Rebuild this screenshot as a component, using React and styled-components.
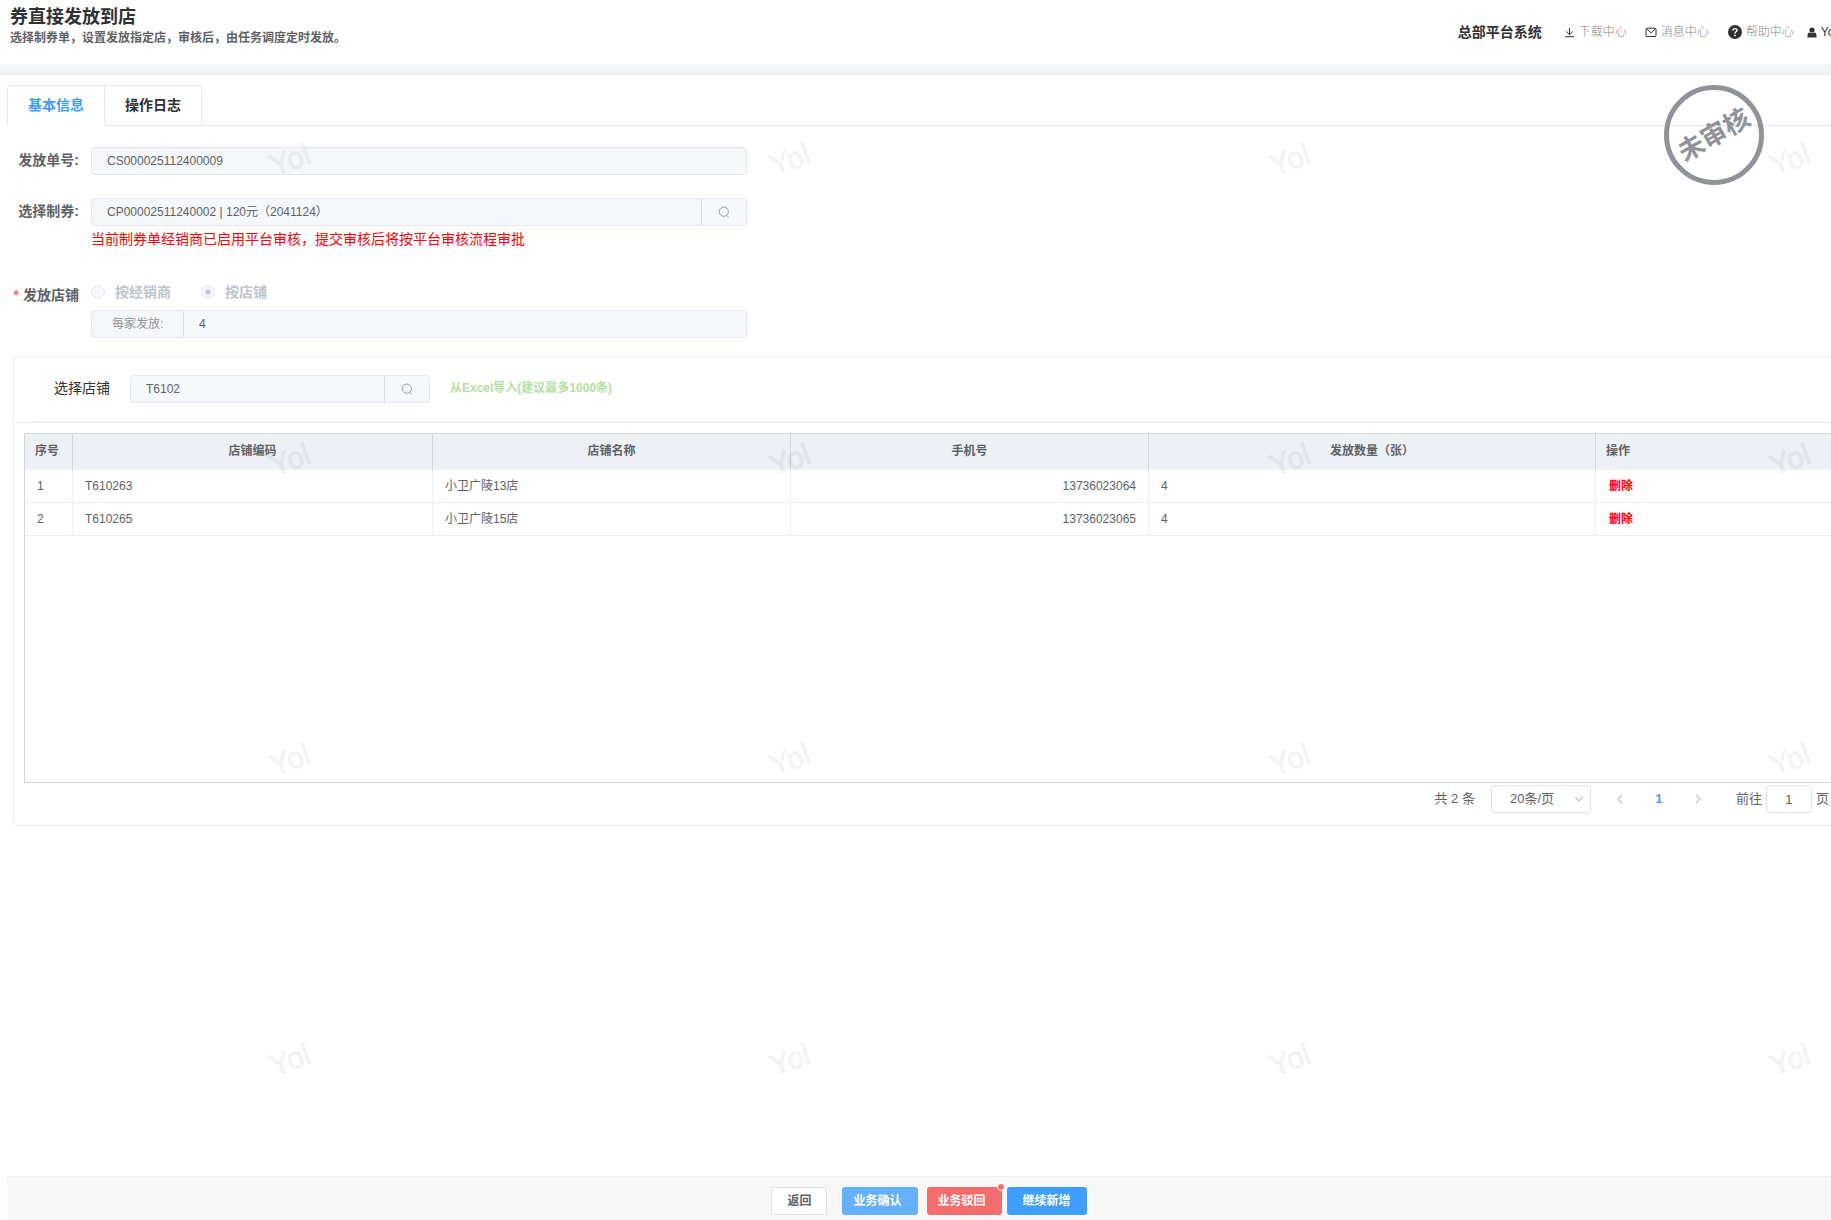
import React, { useState } from "react"
import styled, { createGlobalStyle, css } from "styled-components"

const colors = {
  primary: "#409eff",
  danger: "#f56c6c",
  red: "#ff0000",
  text: "#606266",
  title: "#303133",
  muted: "#909399",
  placeholder: "#c0c4cc",
  border: "#dcdfe6",
  borderLight: "#e4e7ed",
  borderLighter: "#ebeef5",
  disabled: "#f5f7fa",
}

const GlobalStyle = createGlobalStyle`
  * {
    box-sizing: border-box;
  }

  body {
    margin: 0;
    color: ${colors.text};
    font: 12px/18px "Liberation Sans", "Noto Sans CJK SC", sans-serif;
  }

  button, input, select {
    font: inherit;
    margin: 0;
  }
`

const Page = styled.div`
  position: relative;
  display: flex;
  flex-direction: column;
  min-height: 100vh;
  overflow: hidden;
`

const Header = styled.header`
  display: flex;
  justify-content: space-between;
  height: 64px;
  padding: 5px 0 0 10px;
`

const Title = styled.h1`
  margin: 0;
  color: ${colors.title};
  font-size: 18px;
  font-weight: 700;
  line-height: 24px;
`

const SubTitle = styled.p`
  margin: 0;
  font-weight: 700;
`

const Nav = styled.nav`
  display: flex;
  align-items: center;
  height: 54px;
  margin-right: -8px;
  white-space: nowrap;
`

const SystemName = styled.strong`
  margin-right: 22px;
  color: ${colors.title};
  font-size: 14px;
  font-weight: 700;
`

const NavLink = styled.a`
  display: flex;
  align-items: center;
  gap: 4px;
  margin-right: ${props => props.$space || 18}px;
  color: ${props => (props.$strong ? colors.title : "#888")};
  font-weight: ${props => (props.$strong ? 400 : 300)};
  text-decoration: none;

  svg {
    flex: none;
    color: ${colors.title};
  }
`

const Band = styled.div`
  height: 11px;
  background: linear-gradient(#f6f7f9, #f5f6f8 50%, #ebecee);
`

const Main = styled.main`
  position: relative;
  flex: 1;
  padding: 10px 0 20px 7px;
`

const Tabs = styled.div`
  display: flex;
  height: 41px;
  border-bottom: 1px solid ${colors.borderLight};
`

const Tab = styled.button`
  height: 41px;
  padding: 0 20px 2px;
  border: 1px solid ${colors.borderLight};
  border-bottom-color: ${props => (props.$active ? "#fff" : colors.borderLight)};
  border-radius: 0 4px 0 0;
  background: #fff;
  color: ${props => (props.$active ? colors.primary : colors.title)};
  font-size: 14px;
  font-weight: 700;
  cursor: pointer;

  &:first-child {
    border-right: 0;
    border-radius: 4px 0 0 0;
  }
`

const Stamp = styled.div`
  position: absolute;
  top: 10px;
  right: 67px;
  display: flex;
  align-items: center;
  justify-content: center;
  width: 100px;
  height: 100px;
  border: 5px solid ${colors.muted};
  border-radius: 50%;
  color: ${colors.muted};
  font-size: 26px;
  font-weight: 700;
  white-space: nowrap;

  span {
    transform: rotate(-30deg);
  }
`

const Form = styled.form`
  display: grid;
  grid-template-columns: 72px minmax(0, 656px);
  column-gap: 12px;
  padding-top: 21px;
`

const Label = styled.label`
  color: ${colors.text};
  font-size: 14px;
  font-weight: 700;
  line-height: 26px;
  text-align: right;
  white-space: nowrap;

  ${props =>
    props.$required &&
    css`
      line-height: 34px;

      &::before {
        content: "*";
        margin-right: 4px;
        color: ${colors.danger};
      }
    `}
`

const Field = styled.div`
  padding-bottom: ${props => props.$space}px;
`

const InputGroup = styled.div`
  display: flex;
  width: 100%;
  height: 28px;
  border: 1px solid ${colors.borderLight};
  border-radius: 4px;
  background: ${colors.disabled};
  overflow: hidden;
`

const TextInput = styled.input`
  flex: 1;
  min-width: 0;
  padding: 0 15px;
  border: 0;
  outline: 0;
  background: transparent;
  color: ${colors.text};
`

const SearchButton = styled.button`
  display: flex;
  align-items: center;
  justify-content: center;
  width: 45px;
  padding: 0;
  border: 0;
  border-left: 1px solid ${colors.border};
  background: transparent;
  color: ${colors.muted};
`

const Prepend = styled.label`
  width: 92px;
  padding-left: 20px;
  border-right: 1px solid ${colors.border};
  color: ${colors.muted};
  line-height: 26px;
`

const Notice = styled.p`
  margin: 0;
  color: ${colors.red};
  font-size: 14px;
  line-height: 26px;
`

const Radios = styled.div`
  display: flex;
  gap: 30px;
  height: 32px;
`

const RadioLabel = styled.label`
  display: flex;
  align-items: center;
  gap: 10px;
  height: 28px;
  color: ${colors.placeholder};
  font-size: 14px;
  font-weight: 700;
`

const Radio = styled.input`
  appearance: none;
  width: 14px;
  height: 14px;
  border: 1px solid ${colors.borderLight};
  border-radius: 50%;
  background: ${colors.disabled};

  &:checked {
    background: radial-gradient(${colors.placeholder} 2px, ${colors.disabled} 3px);
  }
`

const Card = styled.section`
  margin: 18px 0 0 6px;
  border: 1px solid ${colors.borderLighter};
  border-right: 0;
  border-radius: 4px 0 0 4px;
`

const CardHeader = styled.div`
  display: flex;
  height: 66px;
  padding: 18px 0 0 40px;
  border-bottom: 1px solid ${colors.borderLighter};
`

const ShopLabel = styled.label`
  width: 76px;
  color: ${colors.title};
  font-size: 14px;
  line-height: 26px;
`

const ShopSearch = styled.div`
  width: 300px;
  margin-right: 20px;
`

const ImportButton = styled.button`
  height: 26px;
  padding: 0;
  border: 0;
  background: none;
  color: #b3e19d;
  font-weight: 700;
`

const Divider = styled.hr`
  height: 2px;
  margin: -2px 7px 10px 20px;
  border: 0;
  background: #ebf0f5;
`

const TableBox = styled.div`
  height: 350px;
  margin-left: 10px;
  border: 1px solid #d4d6d9;
  border-right: 0;
`

const Table = styled.table`
  width: 100%;
  border-spacing: 0;
  table-layout: fixed;
`

const HeadCell = styled.th`
  width: ${props => (props.$width ? `${props.$width}px` : "auto")};
  height: 36px;
  padding: 0 10px 2px;
  border-right: 1px solid #d4d6d9;
  background: #edf0f5;
  font-weight: 700;
  text-align: ${props => props.$align || "center"};

  &:last-child {
    border-right: 0;
  }
`

const Cell = styled.td`
  height: 33px;
  padding: 0 12px;
  border-right: 1px solid ${colors.borderLighter};
  border-bottom: 1px solid ${colors.borderLighter};
  text-align: ${props => props.$align || "left"};

  &:last-child {
    border-right: 0;
  }
`

const DeleteButton = styled.button`
  padding: 0 1px;
  border: 0;
  background: none;
  color: ${colors.red};
  font-weight: 700;
  cursor: pointer;
`

const Pagination = styled.div`
  display: flex;
  align-items: center;
  justify-content: flex-end;
  height: 42px;
  padding: 0 2px 10px 0;
  font-size: 13px;
`

const SizeSelect = styled.div`
  position: relative;
  margin: 0 19px 0 16px;

  select {
    appearance: none;
    width: 100px;
    height: 28px;
    padding: 0 25px 0 18px;
    border: 1px solid ${colors.border};
    border-radius: 3px;
    background: #fff;
    color: ${colors.text};
  }

  svg {
    position: absolute;
    top: 9px;
    right: 7px;
    color: ${colors.placeholder};
    pointer-events: none;
  }
`

const PageButton = styled.button`
  display: flex;
  align-items: center;
  justify-content: center;
  width: 20px;
  height: 28px;
  padding: 0;
  border: 0;
  background: none;
  color: ${props => (props.$active ? colors.primary : colors.placeholder)};
  font-weight: 700;
`

const Pager = styled.div`
  display: flex;
  gap: 19px;
  margin-right: 28px;
`

const Jumper = styled.label`
  display: flex;
  align-items: center;
  gap: 4px;

  input {
    width: 46px;
    height: 28px;
    padding: 0;
    border: 1px solid ${colors.border};
    border-radius: 4px;
    color: ${colors.text};
    text-align: center;
  }
`

const Footer = styled.footer`
  display: flex;
  justify-content: center;
  height: 44px;
  margin-left: 7px;
  padding: 10px 0 0 20px;
  border-top: 1px solid #f0f0f0;
  background: #f7f7f7;
`

const variants = {
  plain: css`
    border-color: ${colors.border};
    background: #fff;
    color: ${colors.text};
  `,
  light: css`
    background: #66b1ff;
  `,
  danger: css`
    background: ${colors.danger};
  `,
  primary: css`
    background: ${colors.primary};
  `,
}

const Button = styled.button`
  position: relative;
  height: 28px;
  margin-right: ${props => props.$space || 0}px;
  padding: ${props => (props.$tight ? "0 15px 0 10px" : "0 15px")};
  border: 1px solid transparent;
  border-radius: 3px;
  color: #fff;
  font-weight: 700;
  cursor: pointer;
  ${props => variants[props.$variant]}
`

const Dot = styled.i`
  position: absolute;
  top: -5px;
  right: -4px;
  width: 8px;
  height: 8px;
  border: 1px solid #fff;
  border-radius: 50%;
  background: ${colors.danger};
`

const Watermarks = styled.div`
  position: absolute;
  inset: 0;
  display: grid;
  grid-template-columns: repeat(auto-fill, 500px);
  grid-auto-rows: 300px;
  width: 2500px;
  padding-top: 10px;
  color: #000;
  font-size: 30px;
  opacity: 0.045;
  pointer-events: none;
  -webkit-text-stroke: 1px #000;
`

const Watermark = styled.span`
  display: flex;
  align-items: center;
  justify-content: center;
  width: 80px;
  height: 300px;
  margin-left: 250px;
  transform: rotate(-20deg);
`

const DownloadIcon = () => (
  <svg width="11" height="11" viewBox="0 0 11 11" fill="none" stroke="currentColor">
    <path d="M5.5 1v6.5M2.2 4.5l3.3 3.2 3.3-3.2M1 9.7h9" />
  </svg>
)

const MessageIcon = () => (
  <svg width="12" height="11" viewBox="0 0 12 11" fill="none" stroke="currentColor">
    <rect x="1" y="1.2" width="10" height="8.3" rx="1" />
    <path d="M2 2.2l4 3.6 4-3.6" />
  </svg>
)

const HelpIcon = () => (
  <svg width="14" height="14" viewBox="0 0 14 14" fill="none">
    <circle cx="7" cy="7" r="7" fill="currentColor" />
    <path d="M5 5.5c0-2.6 4-2.5 4-.1C9 6.8 7 6.7 7 8.4" stroke="#fff" strokeWidth="1.4" />
    <circle cx="7" cy="10.4" r=".9" fill="#fff" />
  </svg>
)

const UserIcon = () => (
  <svg width="10" height="11" viewBox="0 0 10 11" fill="currentColor">
    <circle cx="5" cy="3" r="2.6" />
    <path d="M.5 10.5V8.2c0-1.5 1-2.3 2.2-2.6 1.3 1 3.3 1 4.6 0 1.200.3 2.200 1.100 2.200 2.600v2.300z" />
  </svg>
)

const SearchIcon = () => (
  <svg width="12" height="12" viewBox="0 0 12 12" fill="none" stroke="currentColor" strokeWidth=".9">
    <circle cx="5.8" cy="5.7" r="4.6" />
    <path d="M8.500 9.500l2.200 1.500" />
  </svg>
)

const Chevron = ({ d }) => (
  <svg width="10" height="10" viewBox="0 0 10 10" fill="none" stroke="currentColor" strokeWidth="1.2">
    <path d={d} />
  </svg>
)

const shops = [
  { code: "T610263", name: "小卫广陵13店", phone: "13736023064", count: 4 },
  { code: "T610265", name: "小卫广陵15店", phone: "13736023065", count: 4 },
]

const tabs = ["基本信息", "操作日志"]

const App = () => {
  const [activeTab, setActiveTab] = useState(0)

  return (
    <Page>
      <GlobalStyle />
      <Header>
        <div>
          <Title>券直接发放到店</Title>
          <SubTitle>选择制券单，设置发放指定店，审核后，由任务调度定时发放。</SubTitle>
        </div>
        <Nav>
          <SystemName>总部平台系统</SystemName>
          <NavLink href="#download">
            <DownloadIcon />
            下载中心
          </NavLink>
          <NavLink href="#message" $space={19}>
            <MessageIcon />
            消息中心
          </NavLink>
          <NavLink href="#help" $space={13}>
            <HelpIcon />
            帮助中心
          </NavLink>
          <NavLink href="#user" $space={2} $strong>
            <UserIcon />
            Yol
          </NavLink>
        </Nav>
      </Header>
      <Band />
      <Main>
        <Tabs role="tablist">
          {tabs.map((tab, index) => (
            <Tab
              key={tab}
              role="tab"
              aria-selected={index === activeTab}
              $active={index === activeTab}
              onClick={() => setActiveTab(index)}
            >
              {tab}
            </Tab>
          ))}
        </Tabs>
        <Stamp>
          <span>未审核</span>
        </Stamp>
        <Form>
          <Label htmlFor="order">发放单号:</Label>
          <Field $space={23}>
            <InputGroup>
              <TextInput id="order" disabled defaultValue="CS000025112400009" />
            </InputGroup>
          </Field>
          <Label htmlFor="coupon">选择制券:</Label>
          <Field $space={26}>
            <InputGroup>
              <TextInput
                id="coupon"
                disabled
                defaultValue="CP00002511240002 | 120元（2041124）"
              />
              <SearchButton type="button" disabled aria-label="搜索制券">
                <SearchIcon />
              </SearchButton>
            </InputGroup>
            <Notice>当前制券单经销商已启用平台审核，提交审核后将按平台审核流程审批</Notice>
          </Field>
          <Label as="span" $required>
            发放店铺
          </Label>
          <Field $space={0}>
            <Radios>
              <RadioLabel>
                <Radio type="radio" name="target" disabled />
                按经销商
              </RadioLabel>
              <RadioLabel>
                <Radio type="radio" name="target" disabled defaultChecked />
                按店铺
              </RadioLabel>
            </Radios>
            <InputGroup>
              <Prepend htmlFor="perShop">每家发放:</Prepend>
              <TextInput id="perShop" disabled defaultValue="4" />
            </InputGroup>
          </Field>
        </Form>
        <Card>
          <CardHeader>
            <ShopLabel htmlFor="shop">选择店铺</ShopLabel>
            <ShopSearch>
              <InputGroup>
                <TextInput id="shop" disabled defaultValue="T6102" />
                <SearchButton type="button" disabled aria-label="搜索店铺">
                  <SearchIcon />
                </SearchButton>
              </InputGroup>
            </ShopSearch>
            <ImportButton disabled>从Excel导入(建议最多1000条)</ImportButton>
          </CardHeader>
          <Divider />
          <TableBox>
            <Table>
              <thead>
                <tr>
                  <HeadCell $width={48} $align="left">序号</HeadCell>
                  <HeadCell $width={360}>店铺编码</HeadCell>
                  <HeadCell $width={358}>店铺名称</HeadCell>
                  <HeadCell $width={358}>手机号</HeadCell>
                  <HeadCell $width={447}>发放数量（张）</HeadCell>
                  <HeadCell $align="left">操作</HeadCell>
                </tr>
              </thead>
              <tbody>
                {shops.map((shop, index) => (
                  <tr key={shop.code}>
                    <Cell>{index + 1}</Cell>
                    <Cell>{shop.code}</Cell>
                    <Cell>{shop.name}</Cell>
                    <Cell $align="right">{shop.phone}</Cell>
                    <Cell>{shop.count}</Cell>
                    <Cell>
                      <DeleteButton>删除</DeleteButton>
                    </Cell>
                  </tr>
                ))}
              </tbody>
            </Table>
          </TableBox>
          <Pagination>
            <span>共 2 条</span>
            <SizeSelect>
              <select aria-label="每页条数" defaultValue="20">
                <option value="20">20条/页</option>
                <option value="50">50条/页</option>
              </select>
              <Chevron d="M1 3l4 4 4-4" />
            </SizeSelect>
            <Pager>
              <PageButton aria-label="上一页" disabled>
                <Chevron d="M7 1L3 5l4 4" />
              </PageButton>
              <PageButton $active>1</PageButton>
              <PageButton aria-label="下一页" disabled>
                <Chevron d="M3 1l4 4-4 4" />
              </PageButton>
            </Pager>
            <Jumper>
              前往
              <input defaultValue="1" />
              页
            </Jumper>
          </Pagination>
        </Card>
      </Main>
      <Footer>
        <Button $variant="plain" $space={15}>返回</Button>
        <Button $variant="light" $space={9} $tight>业务确认</Button>
        <Button $variant="danger" $space={5} $tight>
          业务驳回
          <Dot />
        </Button>
        <Button $variant="primary">继续新增</Button>
      </Footer>
      <Watermarks aria-hidden="true">
        {Array.from({ length: 20 }, (_, index) => (
          <Watermark key={index}>Yol</Watermark>
        ))}
      </Watermarks>
    </Page>
  )
}

export default App
